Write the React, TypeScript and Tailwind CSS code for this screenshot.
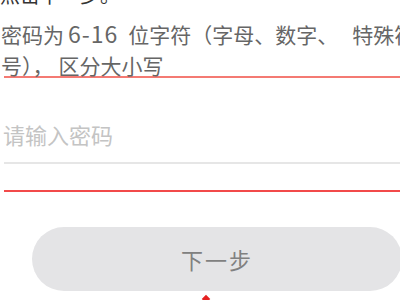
export default function App() {
  return (
    <div
      className="relative w-[400px] h-[300px] overflow-hidden bg-white"
      style={{ fontFamily: '"Noto Sans CJK SC", "Noto Sans", sans-serif' }}
    >
      {/* step hint, mostly scrolled out of view */}
      <div className="mt-[-15px] h-[20px] text-[20px] leading-[20px] text-[#333] whitespace-nowrap">
        点击下一步。
      </div>

      {/* password rule */}
      <div className="mt-[13px] pl-[1px] text-[21px] leading-[31px] text-[#666] whitespace-nowrap">
        <div>
          密码为<span className="ml-[4px] mr-[10px] text-[23px] leading-[31px] tracking-[1px]">6-16</span>位字符（字母、数字、
          <span className="ml-[14px]">特殊符</span>
        </div>
        <div>
          号），<span className="ml-[5px]">区分大小写</span>
        </div>
      </div>
      <div className="ml-[4px] mt-[-5px] h-[2px] bg-[#f47a73]" />

      {/* password input */}
      <div className="ml-[3px] mt-[44px] text-[22px] leading-[24px] text-[#c4c4c4]">请输入密码</div>
      <div className="ml-[4px] mt-[16px] h-[2px] bg-[#e6e6e6]" />
      <div className="ml-[4px] mt-[26px] h-[2px] bg-[#f24a4a]" />

      {/* next button */}
      <div className="ml-[32px] mt-[35px] w-[370px] h-[64px] rounded-full bg-[#e4e4e6] flex items-center justify-center">
        <span className="text-[22px] text-[#808080] tracking-[2px]">下一步</span>
      </div>

      <div className="absolute left-[203px] top-[296px] w-[6px] h-[6px] bg-[#e52020] rotate-45" />
    </div>
  )
}
